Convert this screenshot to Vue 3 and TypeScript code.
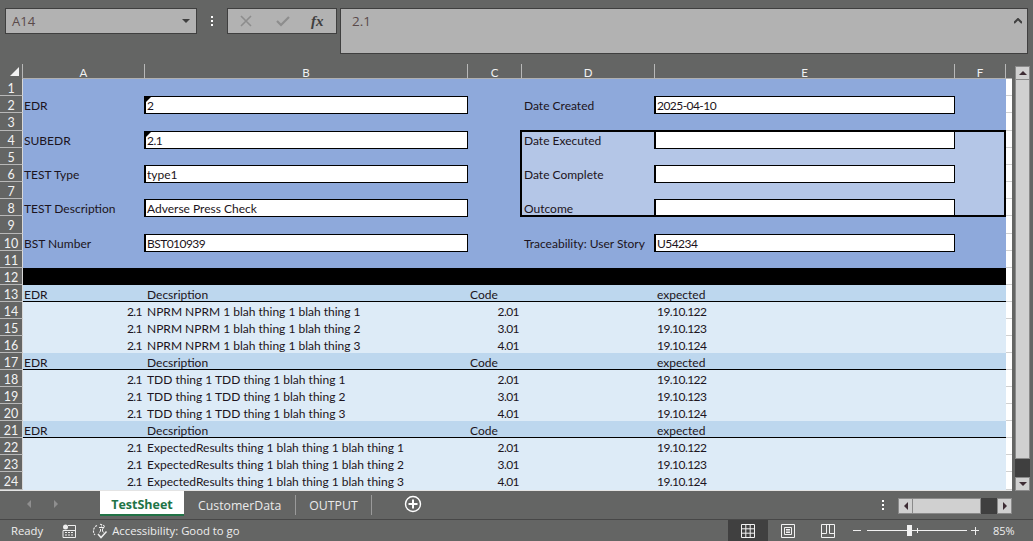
<script setup lang="ts">
interface Cell {
  text?: string;
  cls?: string;
}

const columns = ['A', 'B', 'C', 'D', 'E', 'F'];

const field = (text = '', flag = false): Cell => ({ text, cls: flag ? 'box flag' : 'box' });
const formRow = (label = '', b?: Cell, d = '', e?: Cell): Cell[] => [
  { text: label, cls: 'col-a' },
  b ?? {},
  {},
  { text: d },
  e ?? {},
  {},
];

const rows: { tone: string; cells: Cell[] }[] = [
  { tone: 'form', cells: formRow() },
  { tone: 'form', cells: formRow('EDR', field('2', true), 'Date Created', field('2025-04-10')) },
  { tone: 'form', cells: formRow() },
  { tone: 'form', cells: formRow('SUBEDR', field('2.1', true), 'Date Executed', field()) },
  { tone: 'form', cells: formRow() },
  { tone: 'form', cells: formRow('TEST Type', field('type1'), 'Date Complete', field()) },
  { tone: 'form', cells: formRow() },
  { tone: 'form', cells: formRow('TEST Description', field('Adverse Press Check'), 'Outcome', field()) },
  { tone: 'form', cells: formRow() },
  { tone: 'form', cells: formRow('BST Number', field('BST010939'), 'Traceability: User Story', field('U54234')) },
  { tone: 'form', cells: formRow() },
  { tone: 'black', cells: formRow() },
];

const section = (prefix: string) => {
  rows.push({
    tone: 'head',
    cells: [{ text: 'EDR', cls: 'col-a' }, { text: 'Decsription' }, { text: 'Code' }, {}, { text: 'expected' }, {}],
  });
  [1, 2, 3].forEach((n) => {
    rows.push({
      tone: 'item',
      cells: [
        { text: '2.1', cls: 'num' },
        { text: `${prefix} ${n}` },
        { text: `${n + 1}.01`, cls: 'num' },
        {},
        { text: `19.10.12${n + 1}` },
        {},
      ],
    });
  });
};
section('NPRM NPRM 1 blah thing 1 blah thing');
section('TDD thing 1 TDD thing 1 blah thing');
section('ExpectedResults thing 1 blah thing 1 blah thing');

// Lato's digits run wider than the sheet's font, so tighten digit-heavy values
const isDigits = (text = '') => /\d{2,}|^\d/.test(text);
</script>

<template>
  <div class="excel">
    <div class="formula-row">
      <div class="name-box">
        <span>A14</span>
        <i class="caret"></i>
      </div>
      <div class="dots"><b></b><b></b><b></b></div>
      <div class="formula-btns">
        <svg width="12" height="12" viewBox="0 0 12 12" class="fb-icon">
          <path d="M1 1l10 10M11 1L1 11" stroke="#8d8d8d" stroke-width="1.6" fill="none" />
        </svg>
        <svg width="14" height="12" viewBox="0 0 14 12" class="fb-icon">
          <path d="M1 6l4 4 8-8" stroke="#8d8d8d" stroke-width="2.2" fill="none" />
        </svg>
        <span class="fx">fx</span>
      </div>
      <div class="formula-box">
        <span>2.1</span>
        <svg width="8" height="6" viewBox="0 0 8 6" class="collapse">
          <path d="M0 5l4-4 4 4" stroke="#3f3f3f" stroke-width="2" fill="none" />
        </svg>
      </div>
    </div>

    <div class="main">
      <div class="sheet">
        <div class="corner"><i></i></div>
        <div v-for="c in columns" :key="c" class="col-head">{{ c }}</div>
        <div class="col-end"></div>

        <template v-for="(row, r) in rows" :key="r">
          <div class="row-head">{{ r + 1 }}</div>
          <div
            v-for="(cell, c) in row.cells"
            :key="c"
            class="cell"
            :class="[
              row.tone,
              cell.cls,
              {
                pale: r >= 3 && r <= 7 && c >= 3 && !cell.cls?.includes('box'),
                digits: isDigits(cell.text),
              },
            ]"
          >
            <span>{{ cell.text }}</span>
          </div>
          <div class="strip"></div>
        </template>

        <div class="range-outline"></div>
      </div>

      <div class="v-scroll">
        <div class="sb-btn"><i class="tri up"></i></div>
        <div class="v-track"></div>
        <div class="v-dark"></div>
        <div class="sb-btn"><i class="tri down"></i></div>
      </div>
    </div>

    <div class="tabs-row">
      <div class="tab-nav">
        <i class="nav-tri left"></i>
        <i class="nav-tri right"></i>
      </div>
      <div class="tab active">TestSheet</div>
      <div class="tab sep">CustomerData</div>
      <div class="tab sep">OUTPUT</div>
      <svg class="add-sheet" width="18" height="18" viewBox="0 0 18 18">
        <circle cx="9" cy="9" r="7.5" fill="none" stroke="#fff" stroke-width="1.4" />
        <path d="M9 4.5v9M4.5 9h9" stroke="#fff" stroke-width="2" />
      </svg>
      <div class="tabs-fill"></div>
      <div class="dots light"><b></b><b></b><b></b></div>
      <div class="h-scroll">
        <div class="hs-btn"><i class="tri left"></i></div>
        <div class="h-track"></div>
        <div class="h-dark"></div>
        <div class="hs-btn"><i class="tri right"></i></div>
      </div>
    </div>

    <div class="status">
      <span class="ready">Ready</span>
      <svg class="macro" width="14" height="14" viewBox="0 0 14 14">
        <circle cx="3.5" cy="3" r="2.5" fill="#eee" />
        <path d="M6 1.5h7.5V13.5H1V6.5h12" fill="none" stroke="#eee" />
        <path d="M3 8.5h2M6 8.5h2M9 8.5h2M3 11h2M6 11h2M9 11h2" stroke="#eee" />
      </svg>
      <svg class="a11y" width="18" height="16" viewBox="0 0 18 16">
        <path
          d="M5 2.5A6 6 0 0 0 3 12M8 1.2a6 6 0 0 1 5 3"
          fill="none"
          stroke="#eee"
          stroke-width="1.1"
          stroke-dasharray="2.2 1"
        />
        <path d="M7 4.5h5l-1.5 1.5v2l1 1.5M9.5 2.5v1M8.5 6v2l-1 1.5" fill="none" stroke="#eee" />
        <path d="M6 11l3 3.5 5.5-6" fill="none" stroke="#eee" stroke-width="1.5" />
      </svg>
      <span class="a11y-text">Accessibility: Good to go</span>
      <div class="tabs-fill"></div>
      <div class="view active">
        <svg width="14" height="14" viewBox="0 0 14 14">
          <path d="M.5.5h13v13H.5zM.5 4.8h13M.5 9.2h13M4.8.5v13M9.2.5v13" fill="none" stroke="#f2f2f2" />
        </svg>
      </div>
      <div class="view">
        <svg width="14" height="14" viewBox="0 0 14 14">
          <path d="M.5.5h13v13H.5zM3.5 3.5h7v7h-7zM5 5.5h4M5 7h4M5 8.5h4" fill="none" stroke="#f2f2f2" />
        </svg>
      </div>
      <div class="view">
        <svg width="14" height="14" viewBox="0 0 14 14">
          <path d="M.5.5h13v13H.5zM.5 9.5h5v-9M8.5.5v9h5" fill="none" stroke="#f2f2f2" />
        </svg>
      </div>
      <div class="zoom">
        <span class="zoom-minus"></span>
        <div class="slider">
          <i class="tick"></i>
          <i class="thumb"></i>
        </div>
        <span class="zoom-plus"></span>
        <span class="pct">85%</span>
      </div>
    </div>
  </div>
</template>

<style>
body {
  margin: 0;
  background: #646564;
}
</style>

<style scoped>
.excel {
  width: 1033px;
  height: 541px;
  display: flex;
  flex-direction: column;
  overflow: hidden;
  background: #646564;
  font-family: "Open Sans", "Liberation Sans", sans-serif;
}

/* formula bar */
.formula-row {
  height: 64px;
  box-sizing: border-box;
  padding: 8px 0 0 5px;
  display: flex;
  align-items: flex-start;
  flex: none;
}
.name-box,
.formula-btns,
.formula-box {
  box-sizing: border-box;
  background: #b2b2b2;
  border: 1px solid #3f3f3f;
  display: flex;
  align-items: center;
  color: #5a4a4a;
  font-size: 12px;
}
.name-box {
  width: 192px;
  height: 26px;
  padding: 0 6px;
  justify-content: space-between;
  font-size: 13px;
}
.caret {
  width: 0;
  height: 0;
  border: 4px solid transparent;
  border-top: 4px solid #3f3f3f;
  border-bottom: 0;
}
.dots {
  width: 30px;
  height: 26px;
  display: flex;
  flex-direction: column;
  align-items: center;
  justify-content: center;
  gap: 2px;
}
.dots b {
  width: 2px;
  height: 2px;
  background: #fff;
}
.formula-btns {
  width: 110px;
  height: 26px;
  padding-left: 12px;
  gap: 24px;
}
.fx {
  font-family: "Liberation Serif", serif;
  font-style: italic;
  font-weight: bold;
  font-size: 15px;
  color: #3f3f3f;
  margin-left: -3px;
}
.formula-box {
  width: 688px;
  height: 46px;
  margin-left: 3px;
  padding: 0 0 20px 11px;
  justify-content: space-between;
  font-size: 13.5px;
}
.collapse {
  margin-right: 5px;
}

/* sheet */
.main {
  flex: none;
  height: 427px;
  display: flex;
}
.sheet {
  position: relative;
  width: 1012px;
  height: 427px;
  box-sizing: border-box;
  border-bottom: 1px solid #e4e4e4;
  display: grid;
  grid-template-columns: 23px 122px 323px 54px 133px 300px 51px 6px;
  grid-template-rows: 15px 17px 17px 18px repeat(5, 17px) 18px repeat(14, 17px) 18px;
  font-family: Lato, "Open Sans", sans-serif;
  font-size: 12px;
  color: #1c1420;
}
.corner {
  box-sizing: border-box;
  border-right: 1px solid #b8b8b8;
  display: flex;
  justify-content: flex-end;
  align-items: flex-end;
  padding: 0 3px 3px 0;
}
.corner i {
  width: 0;
  height: 0;
  border-style: solid;
  border-width: 0 0 9px 9px;
  border-color: transparent transparent #f2f2f2 transparent;
}
.col-head {
  box-sizing: border-box;
  color: #f2f2f2;
  font-size: 11.5px;
  line-height: 17px;
  text-align: center;
  border-right: 1px solid #b8b8b8;
  border-bottom: 1px solid #b0b0b0;
}
.col-end {
  border-bottom: 1px solid #b0b0b0;
}
.row-head {
  box-sizing: border-box;
  color: #f2f2f2;
  font-size: 12.5px;
  line-height: 19px;
  text-align: center;
  border-right: 1px solid #d8d8d8;
  border-bottom: 1px solid #b8b8b8;
}
.strip {
  background: #fff;
  border-bottom: 1px solid #d0d0d0;
  box-sizing: border-box;
}
.cell {
  position: relative;
  box-sizing: border-box;
  min-width: 0;
  padding: 0 2px;
  line-height: 19px;
  white-space: nowrap;
}
.col-a {
  padding-left: 1px;
}
.digits {
  letter-spacing: -0.55px;
}
.form {
  background: #8ea9db;
}
.form.pale {
  background: #b4c6e7;
}
.black {
  background: #000;
}
.head {
  background: #bdd7ee;
  border-bottom: 1px solid #000;
}
.item {
  background: #ddebf7;
}
.num {
  text-align: right;
  padding-right: 3px;
}
.box {
  background: #fff;
  border: 1px solid #000;
  box-shadow: -1px 0 0 #000;
  padding-left: 1px;
  line-height: 17px;
  margin-bottom: -1px;
  z-index: 1;
}
.flag::before {
  content: "";
  position: absolute;
  left: 0;
  top: 0;
  border-style: solid;
  border-width: 5px 5px 0 0;
  border-color: #000 transparent transparent transparent;
}
.range-outline {
  position: absolute;
  grid-area: 5 / 5 / 10 / 8;
  top: -1px;
  left: -2px;
  right: 0;
  bottom: -1px;
  border: 2px solid #000;
  z-index: 2;
  pointer-events: none;
}

/* scrollbars */
.v-scroll {
  width: 15px;
  margin-left: 3px;
  padding-top: 2px;
  box-sizing: border-box;
  display: flex;
  flex-direction: column;
}
.sb-btn,
.hs-btn {
  flex: none;
  box-sizing: border-box;
  background: #d0d0d0;
  border: 1px solid #8a8a8a;
  display: flex;
  align-items: center;
  justify-content: center;
}
.sb-btn {
  height: 14px;
}
.v-track {
  flex: 1;
  background: #d0d0d0;
  border: 1px solid #8a8a8a;
  border-top: 0;
}
.v-dark {
  height: 18px;
  flex: none;
  background: #3f3f3f;
}
.tri {
  width: 0;
  height: 0;
  border-style: solid;
}
.tri.up {
  border-width: 0 4px 4px 4px;
  border-color: transparent transparent #3d2b33 transparent;
}
.tri.down {
  border-width: 4px 4px 0 4px;
  border-color: #3d2b33 transparent transparent transparent;
}
.tri.left {
  border-width: 4px 4px 4px 0;
  border-color: transparent #3d2b33 transparent transparent;
}
.tri.right {
  border-width: 4px 0 4px 4px;
  border-color: transparent transparent transparent #3d2b33;
}

/* sheet tabs */
.tabs-row {
  flex: none;
  height: 28px;
  box-sizing: border-box;
  display: flex;
  align-items: flex-start;
  color: #eaeaea;
  font-size: 12.3px;
}
.tab-nav {
  width: 100px;
  height: 26px;
  box-sizing: border-box;
  padding-left: 27px;
  display: flex;
  align-items: center;
  gap: 23px;
  flex: none;
}
.nav-tri {
  width: 0;
  height: 0;
  border-style: solid;
}
.nav-tri.left {
  border-width: 4px 4px 4px 0;
  border-color: transparent #8f8f8f transparent transparent;
}
.nav-tri.right {
  border-width: 4px 0 4px 4px;
  border-color: transparent transparent transparent #8f8f8f;
}
.tab {
  height: 25px;
  box-sizing: border-box;
  flex: none;
}
.tab.active {
  width: 84px;
  background: #fff;
  border-bottom: 2px solid #217346;
  color: #217346;
  font-weight: 700;
  font-size: 12.5px;
  text-align: center;
  line-height: 27px;
}
.tab.sep {
  padding: 0 13px;
  border-right: 1px solid #9a9a9a;
  height: 20px;
  line-height: 22px;
  margin-top: 4px;
}
.tab.active + .tab.sep {
  padding: 0 14px;
}
.add-sheet {
  margin: 4px 0 0 32px;
  flex: none;
}
.tabs-fill {
  flex: 1;
}
.tabs-row .dots {
  margin: 7px 8px 0 0;
  width: 14px;
  height: 14px;
}
.h-scroll {
  width: 114px;
  height: 16px;
  margin: 7px 21px 0 0;
  display: flex;
  flex: none;
}
.hs-btn {
  width: 15px;
  height: 16px;
}
.h-track {
  flex: 1;
  background: #d0d0d0;
  border: 1px solid #8a8a8a;
  border-left: 0;
}
.h-dark {
  width: 16px;
  background: #3f3f3f;
  flex: none;
}

/* status bar */
.status {
  flex: none;
  height: 22px;
  box-sizing: border-box;
  border-top: 1px solid #474747;
  display: flex;
  align-items: center;
  color: #eeeeee;
  font-size: 11.3px;
}
.ready {
  margin-left: 11px;
  margin-top: -1px;
}
.macro {
  margin-left: 19px;
}
.a11y {
  margin-left: 16px;
}
.a11y-text {
  margin: -1px 0 0 2px;
}
.view {
  width: 40px;
  height: 21px;
  flex: none;
  display: flex;
  align-items: center;
  justify-content: center;
}
.view.active {
  background: #404040;
}
.zoom {
  width: 185px;
  flex: none;
  display: flex;
  align-items: center;
  padding-left: 5px;
  box-sizing: border-box;
}
.zoom-minus {
  width: 8px;
  height: 1px;
  background: #eee;
  flex: none;
}
.slider {
  width: 100px;
  height: 1px;
  background: #f2f2f2;
  margin-left: 6px;
  position: relative;
  flex: none;
}
.thumb {
  position: absolute;
  left: 40px;
  top: -5px;
  width: 5px;
  height: 11px;
  background: #f2f2f2;
}
.tick {
  position: absolute;
  left: 50px;
  top: -2px;
  width: 1px;
  height: 5px;
  background: #f2f2f2;
}
.zoom-plus {
  width: 8px;
  height: 8px;
  margin-left: 4px;
  flex: none;
  background:
    linear-gradient(#eee, #eee) center / 8px 1px no-repeat,
    linear-gradient(#eee, #eee) center / 1px 8px no-repeat;
}
.pct {
  margin-left: 14px;
  font-size: 11px;
}
</style>
